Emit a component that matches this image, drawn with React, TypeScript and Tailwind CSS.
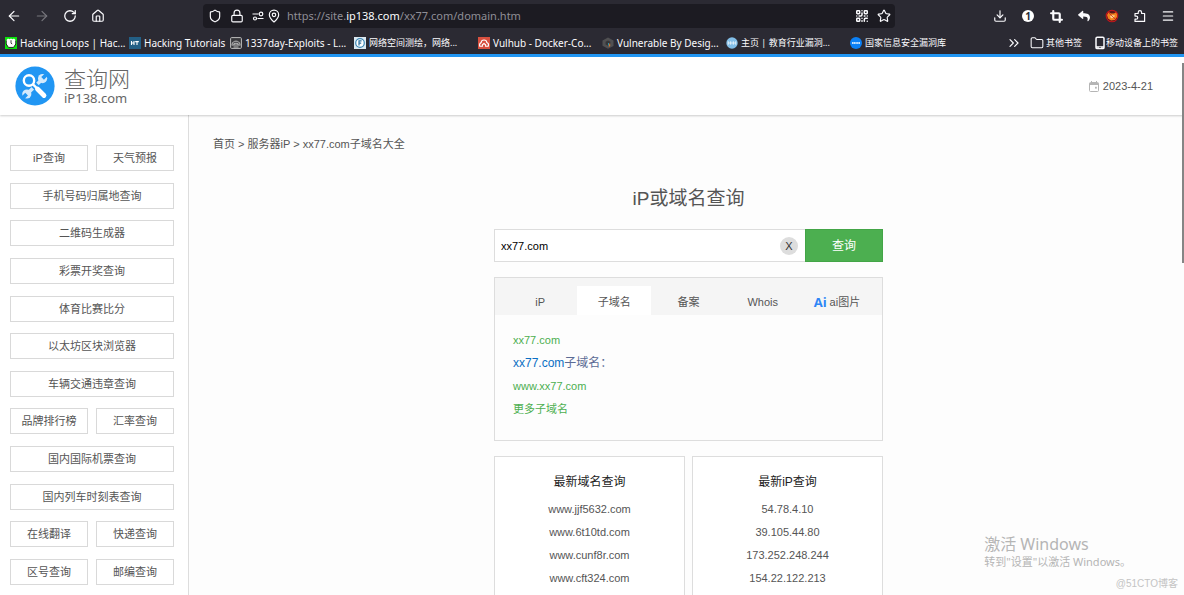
import { useState } from 'react'
import type { ReactNode } from 'react'
import {
  ArrowLeft,
  ArrowRight,
  ChevronsRight,
  Crop,
  Download,
  Folder,
  House,
  Lock,
  MapPin,
  Menu,
  QrCode,
  RotateCw,
  Shield,
  Star,
} from 'lucide-react'
import { FaReply } from 'react-icons/fa'

const SIDEBAR_ROWS = [
  ['iP查询', '天气预报'],
  ['手机号码归属地查询'],
  ['二维码生成器'],
  ['彩票开奖查询'],
  ['体育比赛比分'],
  ['以太坊区块浏览器'],
  ['车辆交通违章查询'],
  ['品牌排行榜', '汇率查询'],
  ['国内国际机票查询'],
  ['国内列车时刻表查询'],
  ['在线翻译', '快递查询'],
  ['区号查询', '邮编查询'],
]

const TABS = ['iP', '子域名', '备案', 'Whois', 'ai图片']

const LATEST_DOMAINS = ['www.jjf5632.com', 'www.6t10td.com', 'www.cunf8r.com', 'www.cft324.com']
const LATEST_IPS = ['54.78.4.10', '39.105.44.80', '173.252.248.244', '154.22.122.213']

function IconButton({ label, children }: { label: string; children: ReactNode }) {
  return (
    <button type="button" aria-label={label} className="flex size-7 shrink-0 items-center justify-center">
      {children}
    </button>
  )
}

function SlidersIcon() {
  return (
    <svg viewBox="0 0 12 12" className="size-3" fill="none" stroke="currentColor" strokeWidth="1.2">
      <path d="M0.5 4h6M5.5 8.5h6" />
      <circle cx="9" cy="4" r="1.8" />
      <circle cx="3" cy="8.5" r="1.5" />
    </svg>
  )
}

function PuzzleIcon() {
  return (
    <svg viewBox="0 0 12 12" className="size-3" fill="none" stroke="currentColor" strokeWidth="1.2" strokeLinejoin="round">
      <path d="M1 5.5V3.5h3.2V2.4a1.7 1.7 0 0 1 3.4 0v1.1h3V11.4H1V9.2h1.2a1.5 1.5 0 0 0 0-3.1H1z" />
    </svg>
  )
}

function FoxIcon() {
  return (
    <svg viewBox="0 0 14 14" className="size-3.5">
      <circle cx="7" cy="7" r="5.8" fill="#5c1418" />
      <path d="M2 6l1.6-3L6 4.4h3L12 2.6l.4 5L9.8 11 6 11.6 3 9.6z" fill="#f2811d" />
      <path d="M5 7l2-1 3 .6L8.5 9 6 9.3z" fill="#ffd089" />
      <circle cx="7" cy="7" r="5.8" fill="none" stroke="#c4161c" strokeWidth="1.1" />
      <path d="M3 3l8 8" stroke="#c4161c" strokeWidth="0.7" />
    </svg>
  )
}

function LoopsIcon() {
  return (
    <svg viewBox="0 0 12 12" className="size-3 shrink-0">
      <rect width="12" height="12" fill="#0be30b" />
      <path d="M1.5 3l1.5-1.5 1.5.8L6 1.5l1.5.8L9 1.5 10.5 3l.3 3.5L8.8 10.5H3.2L1.2 6.5z" fill="#fff" />
      <path d="M1.2 3.5v3.5L3.4 10.4h5.2l2.2-3.4V3.5" fill="none" stroke="#111" strokeWidth="0.9" />
      <path d="M6 3.2v3l1.2.8" fill="none" stroke="#111" strokeWidth="0.8" />
    </svg>
  )
}

function TutorialsIcon() {
  return (
    <svg viewBox="0 0 12 12" className="size-3 shrink-0">
      <rect width="12" height="12" fill="#235f85" />
      <path d="M2.5 4v4M5 4v4M2.5 6H5M6.2 4.6h3.6M8 4.5v3.5" fill="none" stroke="#fff" strokeWidth="1.1" />
    </svg>
  )
}

function ExploitsIcon() {
  return (
    <svg viewBox="0 0 12 12" className="size-3 shrink-0" fill="none" stroke="#bdbdbd">
      <rect x="0.6" y="0.6" width="10.8" height="10.8" rx="1" fill="#38383c" />
      <path d="M2 7.5C2.3 3 9.7 3 10 7.5M1.5 8h9M4 8V6.3h4V8M3.5 10h5" />
    </svg>
  )
}

function FofaIcon() {
  return (
    <svg viewBox="0 0 12 12" className="size-3 shrink-0">
      <rect width="12" height="12" fill="#dbe9f2" />
      <circle cx="6" cy="6" r="4.3" fill="#fff" stroke="#3b86b5" strokeWidth="1.2" />
      <path d="M5 8.6V3.9h2.6M5 6.1h2.2" fill="none" stroke="#2b6f9e" strokeWidth="1.2" />
    </svg>
  )
}

function VulhubIcon() {
  return (
    <svg viewBox="0 0 12 12" className="size-3 shrink-0">
      <rect width="12" height="12" fill="#d8503f" />
      <path d="M1.7 9.2C1 7 2.5 6 3.2 5.6 3.3 2.2 8.7 2.2 8.8 5.6c.9.3 2.2 1.5 1.5 3.6H7.6V7.8L6 6.5 4.4 7.8v1.4z" fill="none" stroke="#fff" strokeWidth="1.1" />
    </svg>
  )
}

function DesignIcon() {
  return (
    <svg viewBox="0 0 12 12" className="size-3 shrink-0">
      <path d="M6 0.5l5.5 3v5.5L6 11.8 0.5 8.8V3.5z" fill="#505052" />
      <path d="M6 3.5l2.4 1.3v2.6L6 8.8 3.6 7.4V4.8z" fill="#353538" />
      <path d="M6 6h1v2.5H6z" fill="#2f8fa8" />
      <path d="M7.4 6.4h.8V9l-1.4 1V9z" fill="#d9772b" />
    </svg>
  )
}

function EduIcon() {
  return (
    <svg viewBox="0 0 12 12" className="size-3 shrink-0">
      <circle cx="6" cy="6" r="5.7" fill="#83bfe8" />
      <path d="M2.2 4.2v3.6M4.7 4.2v3.6M7.3 4.2v3.6M9.8 4.2v3.6M2 6h8" stroke="#fff" strokeWidth="0.7" />
    </svg>
  )
}

function CnnvdIcon() {
  return (
    <svg viewBox="0 0 12 12" className="size-3 shrink-0">
      <circle cx="6" cy="6" r="6" fill="#0b80f5" />
      <path d="M2 6h8" stroke="#fff" strokeWidth="1.6" strokeDasharray="1.4 0.3" />
    </svg>
  )
}

function PhoneIcon() {
  return (
    <svg viewBox="0 0 12 14" className="h-3.5 w-3 shrink-0">
      <rect x="2" y="1.2" width="8" height="11.4" rx="1.2" fill="none" stroke="currentColor" strokeWidth="1.5" />
      <path d="M2 11h8" stroke="currentColor" strokeWidth="1.6" />
      <circle cx="6" cy="11.4" r="0.7" fill="#2b2a33" />
    </svg>
  )
}

function CalendarIcon() {
  return (
    <svg viewBox="0 0 10 11" className="h-[11px] w-2.5" fill="none" stroke="#b5b5b5">
      <rect x="0.5" y="1.5" width="9" height="9" rx="1" />
      <path d="M0.5 3h9" strokeWidth="2" />
      <path d="M2.5 0v2M7.5 0v2" />
      <rect x="6" y="5.8" width="1.8" height="1.8" fill="#b5b5b5" stroke="none" />
    </svg>
  )
}

function LogoMark() {
  return (
    <svg viewBox="0 0 40 40" className="size-10">
      <circle cx="20" cy="20" r="19.6" fill="#2196f3" />
      {/* wrench */}
      <path d="M12.5 27.5L27 13.5" stroke="#d4eafc" strokeWidth="3.6" />
      <circle cx="27.6" cy="12.6" r="4.6" fill="#d4eafc" />
      <circle cx="11.8" cy="28" r="4.6" fill="#d4eafc" />
      <path d="M27.6 12.4L32.5 7.5M11.6 28.2L6.6 33.2" stroke="#2196f3" strokeWidth="3.8" />
      {/* magnifier */}
      <path d="M18 18L29 29" stroke="#2196f3" strokeWidth="6.5" />
      <circle cx="14" cy="14.5" r="6.8" fill="#2196f3" />
      <circle cx="14" cy="14.5" r="5.2" fill="#2196f3" stroke="#fff" strokeWidth="2.4" />
      <path d="M17.8 18.2l4 4" stroke="#fff" strokeWidth="2.4" />
      <path d="M22.5 23l6.5 6.5" stroke="#fff" strokeWidth="4.8" strokeLinecap="round" />
    </svg>
  )
}

const BOOKMARKS = [
  { title: 'Hacking Loops | Hac...', icon: <LoopsIcon />, className: 'w-[124px]' },
  { title: 'Hacking Tutorials', icon: <TutorialsIcon />, className: 'w-[101px]' },
  { title: '1337day-Exploits - L...', icon: <ExploitsIcon />, className: 'w-[124px]' },
  { title: '网络空间测绘，网络...', icon: <FofaIcon />, className: 'w-[124px] text-[9px]' },
  { title: 'Vulhub - Docker-Co...', icon: <VulhubIcon />, className: 'w-[124px]' },
  { title: 'Vulnerable By Desig...', icon: <DesignIcon />, className: 'w-[124px]' },
  { title: '主页 | 教育行业漏洞...', icon: <EduIcon />, className: 'w-[124px] text-[9px]' },
  { title: '国家信息安全漏洞库', icon: <CnnvdIcon />, className: 'w-[124px] text-[9px]' },
]

function BrowserChrome() {
  return (
    <div className="shrink-0 bg-[#2b2a33] font-['Noto_Sans','Noto_Sans_CJK_SC',sans-serif] text-[#fbfbfe]">
      <div className="flex h-8 items-center">
        <div className="flex w-[203px] shrink-0">
          <IconButton label="后退"><ArrowLeft size={16} strokeWidth={1.8} /></IconButton>
          <IconButton label="前进"><ArrowRight size={16} strokeWidth={1.8} className="text-[#77767d]" /></IconButton>
          <IconButton label="刷新"><RotateCw size={14} strokeWidth={2.2} /></IconButton>
          <IconButton label="主页"><House size={14} strokeWidth={2} /></IconButton>
        </div>
        <div className="flex h-6 min-w-0 flex-1 items-center rounded bg-[#1c1b22] pl-[5px] pr-1">
          <Shield size={14} strokeWidth={2} className="mr-2 shrink-0" />
          <Lock size={14} strokeWidth={2} className="mr-2 shrink-0" />
          <div className="mr-[3px] shrink-0"><SlidersIcon /></div>
          <MapPin size={14} strokeWidth={2} className="mr-1.5 shrink-0" />
          <p className="min-w-0 flex-1 truncate text-[11px] leading-4 text-[#8f8e96]">
            https://site.<span className="text-[#fbfbfe]">ip138.com</span>/xx77.com/domain.htm
          </p>
          <button type="button" aria-label="二维码" className="mr-2">
            <QrCode size={14} strokeWidth={2.6} />
          </button>
          <button type="button" aria-label="收藏">
            <Star size={14} strokeWidth={2} />
          </button>
        </div>
        <div className="ml-[91px] flex shrink-0 pr-0.5">
          <IconButton label="下载"><Download size={14} strokeWidth={2} /></IconButton>
          <IconButton label="标签页">
            <span className="flex size-3 items-center justify-center rounded-full bg-white text-[10px] font-bold leading-3 text-[#2b2a33]">1</span>
          </IconButton>
          <IconButton label="截图"><Crop size={13} strokeWidth={4} /></IconButton>
          <IconButton label="返回"><FaReply size={12} /></IconButton>
          <IconButton label="代理"><FoxIcon /></IconButton>
          <IconButton label="扩展"><PuzzleIcon /></IconButton>
          <IconButton label="菜单"><Menu size={14} strokeWidth={2} /></IconButton>
        </div>
      </div>
      <div className="flex h-[22px] items-center pb-px pl-[5px] pr-1.5 text-[10px] leading-4">
        {BOOKMARKS.map((b) => (
          <a key={b.title} href="#" className={`flex shrink-0 items-center gap-[3px] whitespace-nowrap ${b.className}`}>
            {b.icon}
            {b.title}
          </a>
        ))}
        <button type="button" aria-label="更多书签" className="ml-auto mr-2">
          <ChevronsRight size={16} strokeWidth={1.8} />
        </button>
        <a href="#" className="mr-3 flex items-center gap-0.5 whitespace-nowrap text-[9px]">
          <Folder size={14} strokeWidth={1.8} />
          其他书签
        </a>
        <a href="#" className="flex items-center whitespace-nowrap text-[9px]">
          <PhoneIcon />
          移动设备上的书签
        </a>
      </div>
    </div>
  )
}

function SiteHeader() {
  return (
    <header className="z-10 flex h-[61px] shrink-0 items-center justify-between border-t-[3px] border-[#2196f3] bg-white pl-[15px] pr-[31px] shadow-[0_1px_2px_rgba(0,0,0,0.2)]">
      <a href="#" className="flex items-center gap-[9px]">
        <LogoMark />
        <span className="flex flex-col font-['Noto_Sans','Noto_Sans_CJK_SC',sans-serif] text-[#666]">
          <span className="text-[22px] font-light leading-6">查询网</span>
          <span className="text-[13px] leading-4">iP138.com</span>
        </span>
      </a>
      <div className="flex items-center gap-1">
        <CalendarIcon />
        <time dateTime="2023-04-21">2023-4-21</time>
      </div>
    </header>
  )
}

function Sidebar() {
  return (
    <nav className="w-[189px] shrink-0 border-r border-[#ddd] bg-white pl-2.5 pr-3.5 pt-[30px]">
      <div className="flex h-[440px] flex-col justify-between">
        {SIDEBAR_ROWS.map((row) => (
          <div key={row[0]} className="flex gap-2">
            {row.map((item) => (
              <a key={item} href="#" className="flex h-[26px] flex-1 items-center justify-center border border-[#d9d9d9]">
                {item}
              </a>
            ))}
          </div>
        ))}
      </div>
    </nav>
  )
}

function SearchForm() {
  const [query, setQuery] = useState('xx77.com')

  return (
    <form className="mt-[18px] flex h-[33px]" onSubmit={(e) => e.preventDefault()}>
      <div className="flex flex-1 items-center border border-r-0 border-[#ddd] bg-white pl-1.5 pr-[7px]">
        <input
          aria-label="iP或域名"
          value={query}
          onChange={(e) => setQuery(e.target.value)}
          className="min-w-0 flex-1 text-[11px] text-black outline-none"
        />
        <button
          type="button"
          aria-label="清空"
          onClick={() => setQuery('')}
          className="flex size-[18px] items-center justify-center rounded-full bg-[#ddd] text-[#333]"
        >
          X
        </button>
      </div>
      <button type="submit" className="w-[78px] border border-[#43a547] bg-[#4caf50] text-[12px] text-white">
        查询
      </button>
    </form>
  )
}

function ResultPanel() {
  return (
    <section className="mt-[15px] h-[164px] border border-[#ddd]">
      <nav className="flex bg-[#f5f5f5] px-2 pt-2">
        {TABS.map((tab) => (
          <a
            key={tab}
            href="#"
            className={`flex h-[29px] flex-1 items-center justify-center gap-[3px] pt-[3px] ${tab === '子域名' ? 'bg-white' : ''}`}
          >
            {tab === 'ai图片' && <b className="font-['Open_Sans',sans-serif] text-[13px] text-[#2f86f6]">Ai</b>}
            {tab}
          </a>
        ))}
      </nav>
      <div className="flex flex-col items-start pl-[18px] pt-3.5 leading-[23px] text-[#4caf50]">
        <a href="#">xx77.com</a>
        <h2 className="text-[12px] text-[#5b6b95]">
          <a href="#" className="text-[#0b6fc4]">xx77.com</a>子域名：
        </h2>
        <a href="#">www.xx77.com</a>
        <a href="#">更多子域名</a>
      </div>
    </section>
  )
}

function LatestCard({ title, items }: { title: string; items: string[] }) {
  return (
    <section className="flex-1 border border-[#ddd] bg-white pb-6 pt-3.5 text-center leading-[23px]">
      <h2 className="mb-1 text-[12px] text-[#222]">{title}</h2>
      <ul>
        {items.map((item) => (
          <li key={item}><a href="#">{item}</a></li>
        ))}
      </ul>
    </section>
  )
}

export default function App() {
  return (
    <div className="relative flex h-screen flex-col overflow-hidden bg-[#fdfdfd] font-['Liberation_Sans','Noto_Sans_CJK_SC',sans-serif] text-[11px] leading-4 text-[#555]">
      <BrowserChrome />
      <SiteHeader />
      <div className="flex min-h-0 flex-1">
        <Sidebar />
        <main className="min-w-0 flex-1 pl-6 pr-5 pt-[21px]">
          <p>
            <a href="#">首页</a> &gt; <a href="#">服务器iP</a> &gt; xx77.com子域名大全
          </p>
          <div className="mx-auto mt-[35px] max-w-[389px]">
            <h1 className="text-center text-[19px] leading-6">iP或域名查询</h1>
            <SearchForm />
            <ResultPanel />
            <div className="mt-[15px] flex gap-[7px]">
              <LatestCard title="最新域名查询" items={LATEST_DOMAINS} />
              <LatestCard title="最新iP查询" items={LATEST_IPS} />
            </div>
          </div>
        </main>
      </div>

      {/* scrollbar thumb */}
      <div className="absolute right-0 top-[63px] z-20 h-[200px] w-0.5 bg-[#858585]" />

      <div className="pointer-events-none absolute bottom-[25px] right-[53px] font-['Noto_Sans','Noto_Sans_CJK_SC',sans-serif] text-[#b5b5b5]">
        <p className="text-[16px] leading-5">激活 Windows</p>
        <p className="text-[11px] leading-4">转到"设置"以激活 Windows。</p>
      </div>
      <p className="pointer-events-none absolute bottom-[3px] right-1.5 text-[10px] text-[#c4c4c4]">@51CTO博客</p>
    </div>
  )
}
